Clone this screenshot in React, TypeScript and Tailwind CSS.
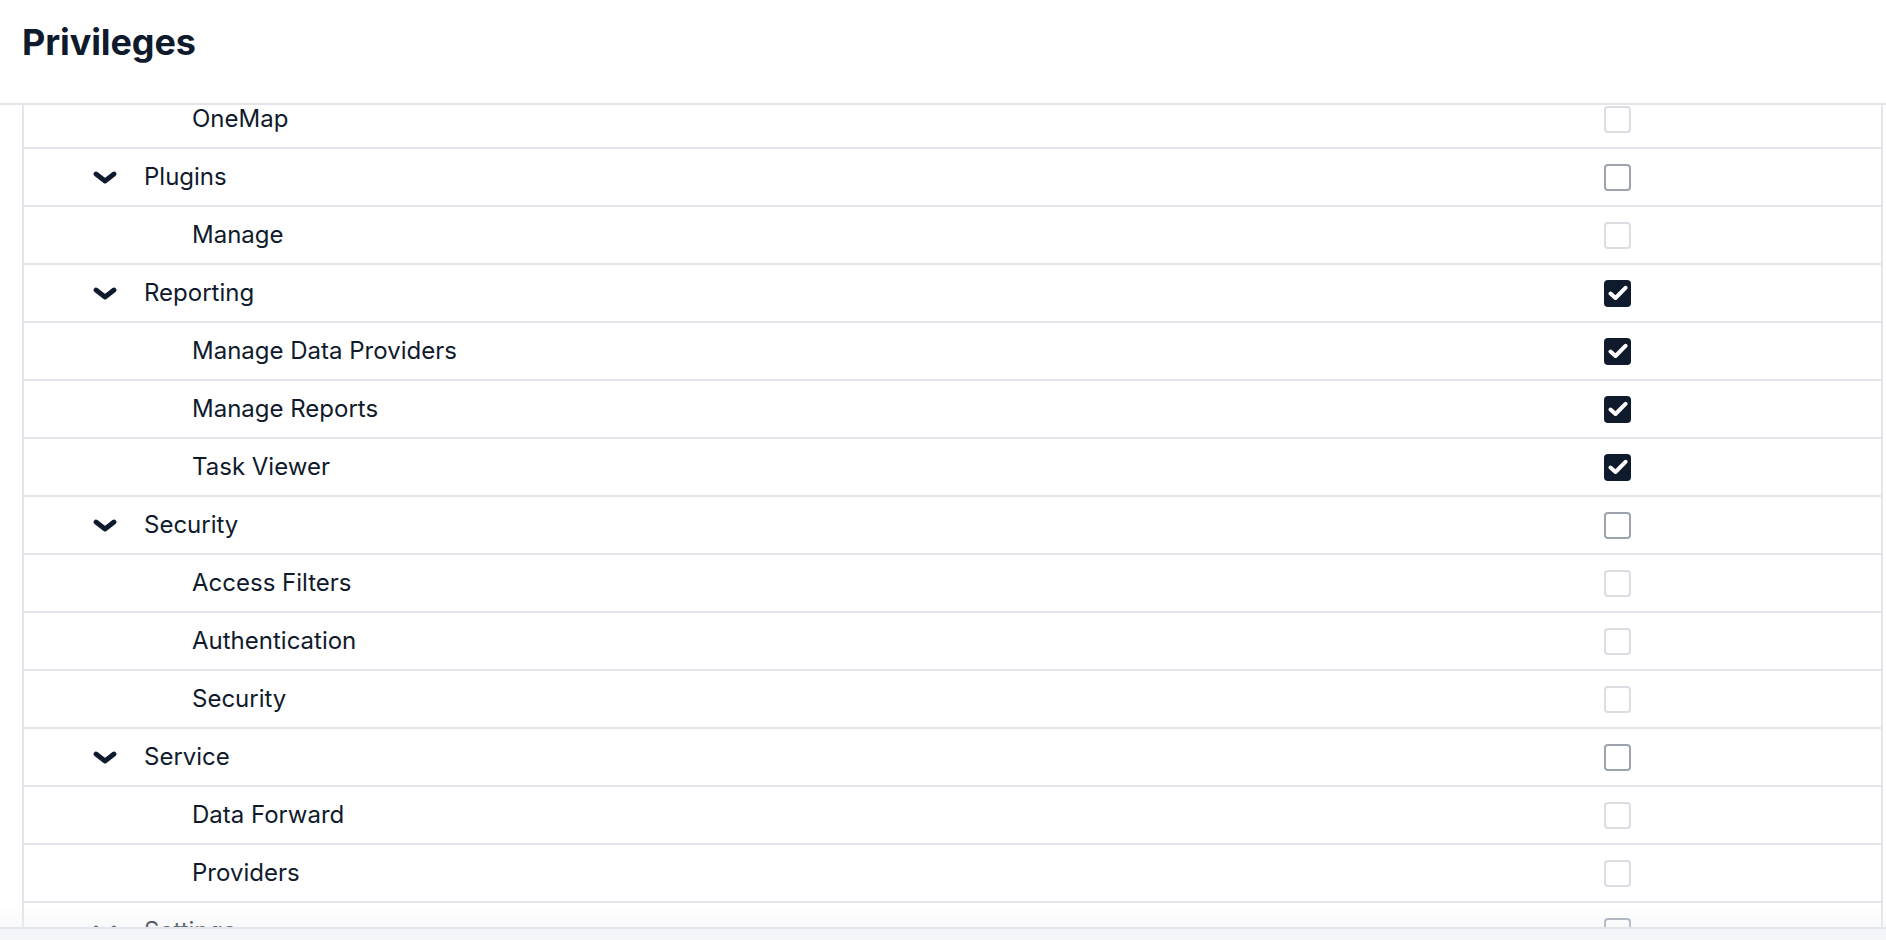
import React from "react";

type Row = {
  label: string;
  level: 0 | 1;
  state: "checked" | "unchecked" | "disabled";
};

const rows: Row[] = [
  { label: "OneMap", level: 1, state: "disabled" },
  { label: "Plugins", level: 0, state: "unchecked" },
  { label: "Manage", level: 1, state: "disabled" },
  { label: "Reporting", level: 0, state: "checked" },
  { label: "Manage Data Providers", level: 1, state: "checked" },
  { label: "Manage Reports", level: 1, state: "checked" },
  { label: "Task Viewer", level: 1, state: "checked" },
  { label: "Security", level: 0, state: "unchecked" },
  { label: "Access Filters", level: 1, state: "disabled" },
  { label: "Authentication", level: 1, state: "disabled" },
  { label: "Security", level: 1, state: "disabled" },
  { label: "Service", level: 0, state: "unchecked" },
  { label: "Data Forward", level: 1, state: "disabled" },
  { label: "Providers", level: 1, state: "disabled" },
  { label: "Settings", level: 0, state: "unchecked" },
];

function Chevron() {
  return (
    <svg width="24" height="13" viewBox="0 0 24 13" className="text-[#0f1b2d]">
      <polyline
        points="3,3 12,10 21,3"
        fill="none"
        stroke="currentColor"
        strokeWidth="4.8"
        strokeLinecap="round"
        strokeLinejoin="round"
      />
    </svg>
  );
}

function Checkbox({ state }: { state: Row["state"] }) {
  if (state === "checked") {
    return (
      <div className="w-[27px] h-[27px] rounded-[4px] bg-[#0f1b2d] flex items-center justify-center">
        <svg width="20" height="16" viewBox="0 0 20 16">
          <polyline
            points="2.5,8.5 7.5,13 17.5,2.8"
            fill="none"
            stroke="white"
            strokeWidth="4"
            strokeLinecap="round"
            strokeLinejoin="round"
          />
        </svg>
      </div>
    );
  }
  return (
    <div
      className={
        state === "unchecked"
          ? "w-[27px] h-[27px] rounded-[4px] border-2 border-[#9ca3af] bg-white"
          : "w-[27px] h-[27px] rounded-[4px] border-2 border-[#dcdde2] bg-white"
      }
    />
  );
}

export default function App() {
  return (
    <div
      className="h-[940px] w-full flex flex-col bg-white text-[#0f1b2d] overflow-hidden"
      style={{ fontFamily: "Inter, 'Noto Sans', sans-serif" }}
    >
      <header className="h-[105px] shrink-0 flex items-start pt-[24px] px-[22px] border-b-2 border-[#e3e5ea]">
        <h1 className="text-[36px] font-bold tracking-[-0.1px] leading-none">Privileges</h1>
      </header>

      <div className="flex-1 relative overflow-hidden">
        <div className="ml-[22px] mr-[3px] border-x-2 border-[#e3e5ea] h-full overflow-hidden">
          <div className="-mt-[14px]">
            {rows.map((r, i) => (
              <div key={i} className="h-[58px] flex items-center border-b-2 border-[#e3e5ea]">
                <div className="flex-1 flex items-center text-[24px] leading-none">
                  {r.level === 0 ? (
                    <>
                      <div className="w-[120px] flex justify-end pr-[27px]">
                        <Chevron />
                      </div>
                      <span>{r.label}</span>
                    </>
                  ) : (
                    <span className="pl-[168px]">{r.label}</span>
                  )}
                </div>
                <div className="w-[527px] flex justify-center">
                  <Checkbox state={r.state} />
                </div>
              </div>
            ))}
          </div>
        </div>
        <div className="absolute left-0 right-0 bottom-0 h-[22px] bg-gradient-to-b from-white/0 to-[#eef0f3]/40 pointer-events-none" />
      </div>

      <footer className="h-[13px] shrink-0 bg-[#f4f5f8] border-t-2 border-[#e3e5ea]" />
    </div>
  );
}
